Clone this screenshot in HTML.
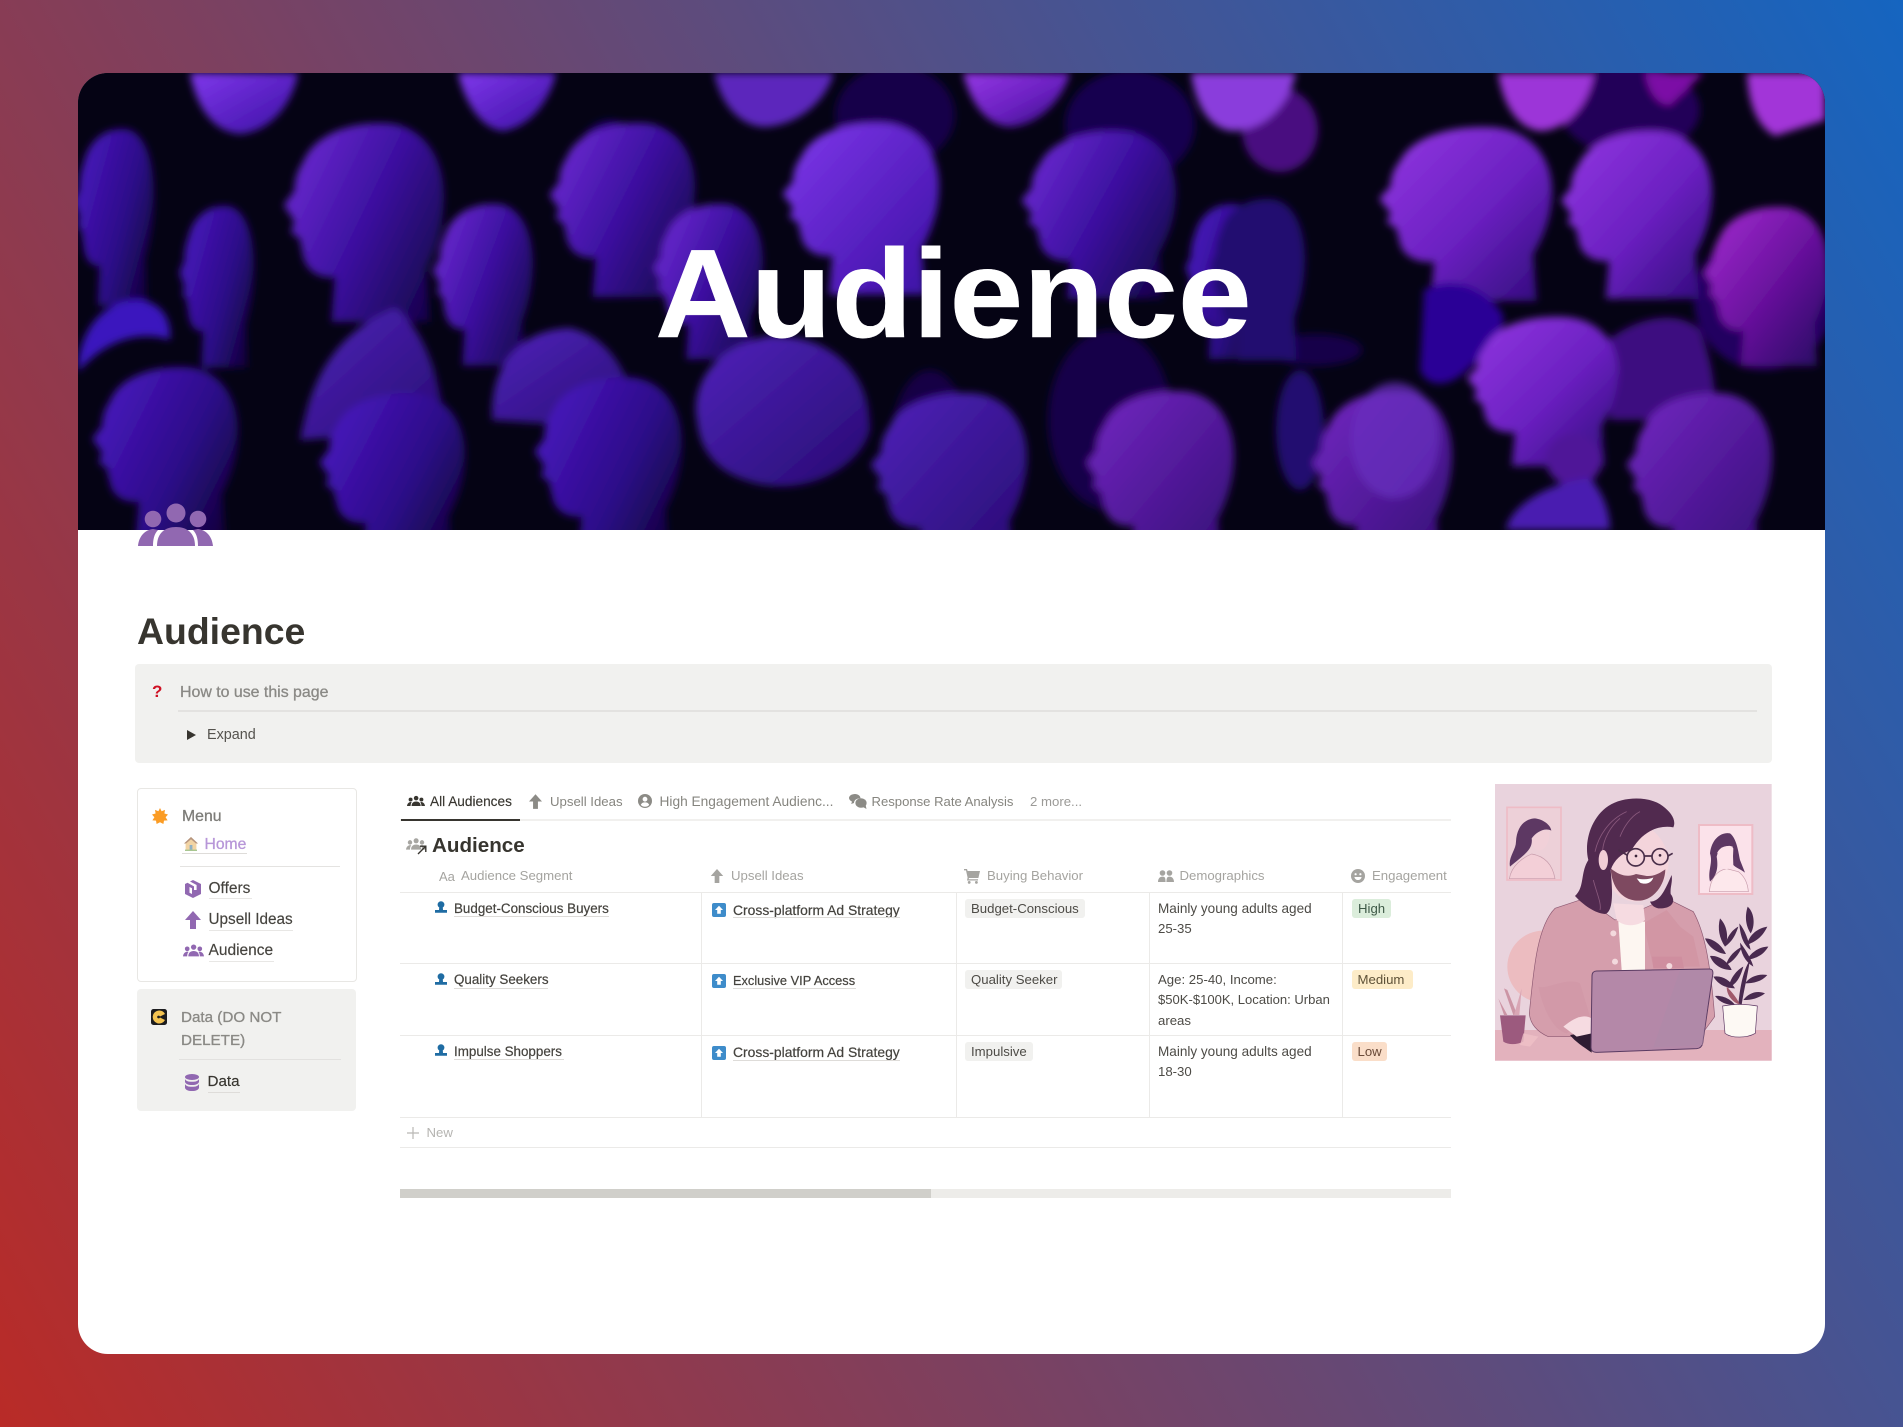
<!DOCTYPE html>
<html lang="en">
<head>
<meta charset="utf-8">
<title>Audience</title>
<style>
html,body{margin:0;padding:0;width:1903px;height:1427px;overflow:hidden}
body{background:linear-gradient(60deg,#b92b27,#1565c0);font-family:"Liberation Sans",sans-serif;color:#37352f;position:relative}
.card{position:absolute;left:78px;top:73px;width:1747px;height:1281px;background:#fff;border-radius:30px;overflow:hidden}
.banner{position:absolute;left:78px;top:73px;width:1747px;height:457px;border-radius:30px 30px 0 0;overflow:hidden;background:#050314}
.banner svg{display:block}
.t{position:absolute;white-space:nowrap;line-height:20px;height:20px}
.sb{-webkit-text-stroke:.3px currentColor}
.u{position:absolute;height:1px;background:#dedcd9}
.ln{position:absolute;background:#ebeaE8}
.i{position:absolute;display:block}
.box{position:absolute}
.tag{position:absolute;height:19px;border-radius:3px}
.hd{font-size:13.2px;color:#a5a4a0}
.tab{font-size:13.3px;color:#86857f}
.cell{font-size:13.2px;color:#4d4b46}
.nm{font-size:13.4px;color:#45433e;-webkit-text-stroke:.2px currentColor}
.side{font-size:15.5px;color:#45433e;-webkit-text-stroke:.15px currentColor}
</style>
</head>
<body>
<svg width="0" height="0" style="position:absolute">
<defs>
<path id="h" d="M20 25C27 6 50-1 70 1C90 4 100 24 100 46C100 64 96 78 90 92L92 125L36 125L38 97C30 98 22 94 20 84L18 73L13 69L15 62L9 52L15 43C15 36 17 30 20 25Z"/>
<linearGradient id="v1" x1="0" y1="0" x2="1" y2="1"><stop offset="0" stop-color="#9438e4"/><stop offset=".55" stop-color="#6a20c0"/><stop offset="1" stop-color="#2e0a78"/></linearGradient>
<linearGradient id="v2" x1="0" y1=".2" x2="1" y2=".8"><stop offset="0" stop-color="#6c2ad2"/><stop offset=".5" stop-color="#3c10a0"/><stop offset="1" stop-color="#16044c"/></linearGradient>
<linearGradient id="v3" x1="0" y1=".2" x2="1" y2=".8"><stop offset="0" stop-color="#4a18c0"/><stop offset=".6" stop-color="#2c0a88"/><stop offset="1" stop-color="#12043c"/></linearGradient>
<linearGradient id="v4" x1="0" y1="0" x2="1" y2="1"><stop offset="0" stop-color="#a62fd4"/><stop offset=".5" stop-color="#6c12a0"/><stop offset="1" stop-color="#240860"/></linearGradient>
<linearGradient id="v5" x1="0" y1="0" x2="1" y2="1"><stop offset="0" stop-color="#8038ec"/><stop offset="1" stop-color="#3a0fa2"/></linearGradient>
<linearGradient id="v6" x1="0" y1="0" x2="1" y2="1"><stop offset="0" stop-color="#5024bc"/><stop offset="1" stop-color="#260a70"/></linearGradient>
<linearGradient id="v7" x1="0" y1="0" x2="1" y2="1"><stop offset="0" stop-color="#7428c4"/><stop offset="1" stop-color="#330c74"/></linearGradient>
<filter id="b" x="-5%" y="-5%" width="110%" height="110%"><feGaussianBlur stdDeviation="4"/></filter>
<filter id="b2"><feGaussianBlur stdDeviation="1"/></filter>
<symbol id="ppl" viewBox="0 0 75 44"><circle cx="38" cy="10" r="9.5"/><circle cx="15" cy="16" r="8.3"/><circle cx="60" cy="16" r="8.3"/><path d="M19 43C19 30 27 24 38 24S57 30 57 43Z"/><path d="M0 43C1 33 7 27 15 26L20 27C16 31 15 37 15 43Z"/><path d="M75 43C74 33 68 27 60 26L55 27C59 31 60 37 60 43Z"/></symbol>
<symbol id="arr" viewBox="0 0 16 18"><path d="M8 0L16 9H11V18H5V9H0Z"/></symbol>
<symbol id="usr" viewBox="0 0 12 12"><circle cx="6" cy="3.6" r="3.4"/><path d="M4.2 6.5H7.8L8 9H12V11.7H0V9H4Z"/></symbol>
<symbol id="ups" viewBox="0 0 14 14"><rect width="14" height="14" rx="2" fill="#3e8cca"/><path d="M7 2.8L11 7H8.8V10.8H5.2V7H3Z" fill="#fff"/></symbol>
</defs>
</svg>

<div class="card"></div>

<div class="banner">
<svg width="1747" height="457" viewBox="78 73 1747 457" role="img">
<rect x="78" y="73" width="1747" height="457" fill="#050314"/>
<g filter="url(#b)">
<!-- dark underlayers -->
<ellipse cx="1130" cy="125" rx="65" ry="55" fill="#180650"/>
<ellipse cx="895" cy="115" rx="60" ry="50" fill="#150548"/>
<ellipse cx="1630" cy="110" rx="70" ry="45" fill="#220658"/>
<ellipse cx="1280" cy="130" rx="38" ry="42" fill="#4a0d80"/>
<ellipse cx="1110" cy="420" rx="62" ry="90" fill="#140548"/>
<ellipse cx="1316" cy="350" rx="46" ry="16" fill="#140548"/>
<ellipse cx="1300" cy="430" rx="24" ry="60" fill="#200870"/>
<ellipse cx="610" cy="170" rx="36" ry="50" fill="#180660"/>
<ellipse cx="1764" cy="300" rx="70" ry="70" fill="#220660"/>
<ellipse cx="930" cy="450" rx="40" ry="80" fill="#120444"/>
<!-- top blobs -->
<path d="M190 73H298C292 105 270 132 240 134C212 132 196 105 190 73Z" fill="url(#v5)"/>
<path d="M458 73H556C550 100 530 128 502 131C480 128 464 100 458 73Z" fill="url(#v5)"/>
<path d="M714 73H834C826 100 800 125 764 127C736 125 720 100 714 73Z" fill="#5b28bc"/>
<path d="M963 73H1070C1062 100 1040 125 1010 127C984 125 970 100 963 73Z" fill="url(#v1)"/>
<path d="M1191 73H1296C1290 100 1270 130 1232 131C1206 128 1195 100 1191 73Z" fill="#8a3cdc"/>
<path d="M1498 73H1594C1590 100 1570 130 1540 131C1515 128 1502 100 1498 73Z" fill="#9c36d8"/>
<path d="M1645 73H1704L1670 105C1656 105 1648 90 1645 73Z" fill="#7c10a6"/>
<path d="M1747 73H1825V120L1775 136C1755 125 1748 100 1747 73Z" fill="#a236d8"/>
<!-- back heads -->
<use href="#h" transform="translate(66,128) scale(.88,1.42)" fill="url(#v3)"/>
<use href="#h" transform="translate(172,205) scale(.82,1.3)" fill="url(#v3)"/>
<use href="#h" transform="translate(268,122) scale(1.76,1.6)" fill="url(#v2)"/>
<use href="#h" transform="translate(423,203) scale(1.1,1.3)" fill="url(#v2)"/>
<use href="#h" transform="translate(535,122) scale(1.6,1.4)" fill="url(#v2)"/>
<use href="#h" transform="translate(643,203) scale(1.2,1.25)" fill="url(#v2)"/>
<use href="#h" transform="translate(767,122) scale(1.72,1.38)" fill="url(#v5)"/>
<use href="#h" transform="translate(1006,130) scale(1.7,1.35)" fill="url(#v2)"/>
<use href="#h" transform="translate(1178,203) scale(.85,1.25)" fill="url(#v3)"/>
<use href="#h" transform="translate(1200,198) scale(1.05,1.3)" fill="#240870"/>
<use href="#h" transform="translate(1362,126) scale(1.9,1.4)" fill="url(#v1)"/>
<use href="#h" transform="translate(1546,130) scale(1.66,1.35)" fill="url(#v1)"/>
<use href="#h" transform="translate(1692,206) scale(1.36,1.28)" fill="url(#v4)"/>
<path d="M1424 290C1445 278 1475 280 1500 310C1512 325 1490 350 1465 372C1445 390 1425 385 1420 370Z" fill="#2a0096"/>
<!-- mid shoulders -->
<path d="M78 362C84 320 112 298 140 300C160 302 172 318 170 340C140 330 105 340 78 372Z" fill="#3a12be"/>
<path d="M300 440C310 385 330 335 395 308C420 325 440 370 445 430Z" fill="url(#v6)"/>
<path d="M492 420C490 370 515 330 570 328C600 335 630 360 640 430Z" fill="url(#v6)"/>
<path d="M1608 340C1640 315 1680 310 1700 330C1712 360 1716 390 1716 420H1610Z" fill="#3c1080"/>
<path d="M697 420C690 385 715 345 770 336C830 335 870 370 870 430C860 470 800 500 745 480C715 470 700 450 697 420Z" fill="url(#v6)"/>
<!-- lower heads -->
<use href="#h" transform="translate(78,366) scale(1.6,1.4)" fill="url(#v3)"/>
<use href="#h" transform="translate(305,392) scale(1.6,1.35)" fill="url(#v3)"/>
<use href="#h" transform="translate(520,376) scale(1.62,1.45)" fill="url(#v3)"/>
<use href="#h" transform="translate(855,392) scale(1.72,1.4)" fill="url(#v6)"/>
<use href="#h" transform="translate(1072,390) scale(1.62,1.4)" fill="url(#v7)"/>
<use href="#h" transform="translate(1298,390) scale(1.54,1.4)" fill="url(#v7)"/>
<ellipse cx="1395" cy="440" rx="44" ry="58" fill="#6a30c0" opacity=".7"/>
<use href="#h" transform="translate(1452,316) scale(1.66,1.2)" fill="url(#v1)"/>
<ellipse cx="1574" cy="460" rx="28" ry="26" fill="#4f1698"/>
<path d="M1506 530C1510 505 1550 482 1590 478C1605 495 1610 515 1610 530Z" fill="#4a1cb0"/>
<use href="#h" transform="translate(1612,392) scale(1.6,1.4)" fill="url(#v7)"/>
</g>
</svg>
<div style="position:absolute;left:577px;top:146px;font-size:126px;line-height:150px;font-weight:700;color:#fff;white-space:nowrap;-webkit-text-stroke:.5px #fff;transform:scaleX(1.052);transform-origin:0 0">Audience</div>
</div>

<!-- page icon -->
<svg class="i" style="left:138px;top:503px;width:75px;height:44px;fill:#9168b1"><use href="#ppl"/></svg>

<div class="t" style="left:137px;top:611px;font-size:37.4px;line-height:40px;height:40px;font-weight:700">Audience</div>

<!-- callout -->
<div class="box" style="left:135px;top:664px;width:1637px;height:99px;background:#f1f1ef;border-radius:4px"></div>
<div class="t" style="left:152px;top:682px;font-size:17px;font-weight:700;color:#cf1124">?</div>
<div class="t sb" style="left:180px;top:683px;font-size:15.9px;color:#8a8985">How to use this page</div>
<div class="ln" style="left:178px;top:710px;width:1579px;height:2px;background:#e3e2e0"></div>
<svg class="i" style="left:187px;top:730px;width:9px;height:10px"><path d="M0 0L9 5L0 10Z" fill="#37352f"/></svg>
<div class="t" style="left:207px;top:725px;font-size:14.4px;color:#55534e">Expand</div>

<!-- menu box -->
<div class="box" style="left:137px;top:788px;width:218px;height:192px;border:1.5px solid #e8e7e4;border-radius:4px;background:#fff"></div>
<svg class="i" style="left:152px;top:808px;width:16px;height:16px" viewBox="0 0 16 16"><path d="M8 0L9.6 3.2L13 1.9L12.4 5.5L16 6.5L13.6 9.2L15.6 12.4L12 12.6L11.4 16L8 14.2L4.6 16L4 12.6L.4 12.4L2.4 9.2L0 6.5L3.6 5.5L3 1.9L6.4 3.2Z" fill="#fb9c24"/></svg>
<div class="t sb" style="left:182px;top:807px;font-size:15.8px;color:#7d7c78">Menu</div>
<svg class="i" style="left:184px;top:837px;width:14px;height:14px" viewBox="0 0 14 14"><path d="M7 0L14 6.5H12.4V13H1.6V6.5H0Z" fill="#f2d4a4"/><path d="M7 0L14 6.5H12L7 2.2L2 6.5H0Z" fill="#b5947e"/><rect x="5.6" y="8" width="2.8" height="5" fill="#8fb0c4"/><rect x="1" y="12.6" width="12" height="1.4" fill="#a8c690"/></svg>
<div class="t sb" style="left:204.5px;top:835px;font-size:15.7px;color:#b796d8">Home</div>
<div class="u" style="left:182px;top:853px;width:65px"></div>
<div class="ln" style="left:180px;top:866px;width:160px;height:1px;background:#e4e3e1"></div>

<svg class="i" style="left:184px;top:880px;width:18px;height:18px" viewBox="0 0 18 18"><path d="M9 0L17 4V14L9 18L1 14V4L3.5 2.8L10 6.4V10H12.6V5L6 1.5Z" fill="#9168b1"/><path d="M5.5 7L8 8.3V14L5.5 12.7Z" fill="#fff"/></svg>
<div class="t side" style="left:208.5px;top:879px">Offers</div>
<div class="u" style="left:209px;top:898px;width:43px;background:#e8e7e5"></div>

<svg class="i" style="left:185px;top:911px;width:16px;height:18px;fill:#9168b1"><use href="#arr"/></svg>
<div class="t side" style="left:208.5px;top:910px;font-size:15.3px">Upsell Ideas</div>
<div class="u" style="left:209px;top:930px;width:84px;background:#e8e7e5"></div>

<svg class="i" style="left:183px;top:944px;width:21px;height:13px;fill:#9168b1"><use href="#ppl"/></svg>
<div class="t side" style="left:208.5px;top:941px">Audience</div>
<div class="u" style="left:209px;top:961px;width:65px;background:#e8e7e5"></div>

<!-- data box -->
<div class="box" style="left:137px;top:989px;width:219px;height:122px;background:#f1f1ef;border-radius:4px"></div>
<svg class="i" style="left:151px;top:1009px;width:16px;height:16px" viewBox="0 0 16 16"><rect width="16" height="16" rx="2.5" fill="#1d1d1f"/><path d="M8 1.5A6.5 6.5 0 1 0 14 11L8 8L14 5A6.5 6.5 0 0 0 8 1.5Z" fill="#f5c451"/><circle cx="7.6" cy="8" r="1.4" fill="#1d1d1f"/></svg>
<div class="t sb" style="left:181px;top:1008px;font-size:15.2px;color:#8a8985">Data (DO NOT</div>
<div class="t sb" style="left:181px;top:1031px;font-size:15.2px;color:#8a8985">DELETE)</div>
<div class="ln" style="left:179px;top:1059px;width:162px;height:1px;background:#e2e1df"></div>
<svg class="i" style="left:185px;top:1074px;width:14px;height:17px" viewBox="0 0 14 17"><ellipse cx="7" cy="3" rx="7" ry="3" fill="#9168b1"/><path d="M0 5C1 7 3 7.8 7 7.8S13 7 14 5V8C13 10 11 11 7 11S1 10 0 8Z" fill="#9168b1"/><path d="M0 10C1 12 3 12.8 7 12.8S13 12 14 10V14C13 16 11 17 7 17S1 16 0 14Z" fill="#9168b1"/></svg>
<div class="t side" style="left:207.5px;top:1072px;font-size:15.2px;color:#37352f">Data</div>
<div class="u" style="left:208px;top:1092px;width:32px"></div>

<!-- tabs -->
<svg class="i" style="left:407px;top:795px;width:18px;height:12px;fill:#37352f"><use href="#ppl"/></svg>
<div class="t tab sb" style="left:430px;top:792px;color:#37352f;font-size:13.65px;-webkit-text-stroke:.15px">All Audiences</div>
<svg class="i" style="left:529px;top:794px;width:13px;height:15px;fill:#8c8b86"><use href="#arr"/></svg>
<div class="t tab" style="left:550px;top:792px;font-size:13.2px">Upsell Ideas</div>
<svg class="i" style="left:638px;top:794px;width:14px;height:14px" viewBox="0 0 14 14"><circle cx="7" cy="7" r="7" fill="#8c8b86"/><circle cx="7" cy="5.2" r="2.4" fill="#fff"/><path d="M2.8 11C3.6 9 5 8.4 7 8.4S10.4 9 11.2 11C10 12.2 8.6 12.8 7 12.8S4 12.2 2.8 11Z" fill="#fff"/></svg>
<div class="t tab" style="left:659.5px;top:792px;font-size:13.72px">High Engagement Audienc...</div>
<svg class="i" style="left:849px;top:794px;width:18px;height:15px" viewBox="0 0 18 15"><path d="M6 0C9 0 11.5 1.8 11.5 4.4C8 4 5 6 5 9L2.2 10L3 7.6C1.2 6.8 0 5.4 0 4C0 1.8 2.8 0 6 0Z" fill="#8c8b86"/><ellipse cx="12" cy="9" rx="5.6" ry="4.8" fill="#8c8b86"/><path d="M14 13L17.5 15L16.6 11Z" fill="#8c8b86"/></svg>
<div class="t tab" style="left:871.5px;top:792px;font-size:13.1px">Response Rate Analysis</div>
<div class="t tab" style="left:1030px;top:792px;color:#9b9a97;font-size:13.2px">2 more...</div>
<div class="ln" style="left:400px;top:819px;width:1051px;height:2px;background:#f1f0ee"></div>
<div class="ln" style="left:401px;top:819px;width:119px;height:2px;background:#37352f"></div>

<!-- db title -->
<svg class="i" style="left:406px;top:838px;width:20px;height:12px;fill:#a7a6a2"><use href="#ppl"/></svg>
<svg class="i" style="left:417px;top:845px;width:10px;height:10px" viewBox="0 0 10 10"><path d="M1 9L8.5 1.5M3 1.2H8.8V7" fill="none" stroke="#37352f" stroke-width="1.4"/></svg>
<div class="t" style="left:432px;top:836px;font-size:20.6px;font-weight:700">Audience</div>

<!-- header -->
<div class="t hd" style="left:439px;top:867px;font-size:13px;color:#a5a4a0">Aa</div>
<div class="t hd" style="left:461px;top:866px">Audience Segment</div>
<svg class="i" style="left:710px;top:869px;width:14px;height:14px;fill:#a5a4a0"><use href="#arr"/></svg>
<div class="t hd" style="left:731px;top:866px">Upsell Ideas</div>
<svg class="i" style="left:964px;top:869px;width:16px;height:15px" viewBox="0 0 16 15"><path d="M0 0H3L3.6 2H16L14.4 9H5L4.6 10.2H14V11.5H3L3.6 8.6L2 1.4H0Z" fill="#a5a4a0"/><circle cx="5.2" cy="13.4" r="1.4" fill="#a5a4a0"/><circle cx="12.4" cy="13.4" r="1.4" fill="#a5a4a0"/></svg>
<div class="t hd" style="left:987px;top:866px">Buying Behavior</div>
<svg class="i" style="left:1158px;top:870px;width:16px;height:12px" viewBox="0 0 16 12"><circle cx="4.5" cy="3" r="2.8" fill="#a5a4a0"/><circle cx="11.5" cy="3" r="2.8" fill="#a5a4a0"/><path d="M0 12C0 8.6 1.8 6.6 4.5 6.6S7.4 8 7.6 12ZM8.4 12C8.6 8 9 6.6 11.5 6.6S16 8.6 16 12Z" fill="#a5a4a0"/></svg>
<div class="t hd" style="left:1179.5px;top:866px">Demographics</div>
<svg class="i" style="left:1351px;top:869px;width:14px;height:14px" viewBox="0 0 14 14"><circle cx="7" cy="7" r="7" fill="#a5a4a0"/><circle cx="4.6" cy="5.2" r="1.1" fill="#fff"/><circle cx="9.4" cy="5.2" r="1.1" fill="#fff"/><path d="M3.4 8H10.6C10.2 10 8.8 11 7 11S3.8 10 3.4 8Z" fill="#fff"/></svg>
<div class="t hd" style="left:1372px;top:866px">Engagement</div>

<!-- grid lines -->
<div class="ln" style="left:400px;top:892px;width:1051px;height:1px"></div>
<div class="ln" style="left:400px;top:963px;width:1051px;height:1px"></div>
<div class="ln" style="left:400px;top:1035px;width:1051px;height:1px"></div>
<div class="ln" style="left:400px;top:1117px;width:1051px;height:1px"></div>
<div class="ln" style="left:400px;top:1147px;width:1051px;height:1px"></div>
<div class="ln" style="left:701px;top:892px;width:1px;height:225px"></div>
<div class="ln" style="left:956px;top:892px;width:1px;height:225px"></div>
<div class="ln" style="left:1149px;top:892px;width:1px;height:225px"></div>
<div class="ln" style="left:1342px;top:892px;width:1px;height:225px"></div>

<!-- row 1 -->
<svg class="i" style="left:434.5px;top:901px;width:12px;height:12px;fill:#1f6ca3"><use href="#usr"/></svg>
<div class="t nm" style="left:454px;top:899px">Budget-Conscious Buyers</div>
<div class="u" style="left:454px;top:916px;width:155px"></div>
<svg class="i" style="left:712px;top:903px;width:14px;height:14px"><use href="#ups"/></svg>
<div class="t nm" style="left:733px;top:899.5px;font-size:13.9px">Cross-platform Ad Strategy</div>
<div class="u" style="left:733px;top:917px;width:167px"></div>
<div class="tag" style="left:965px;top:899px;width:120px;background:#f1f1ef"></div>
<div class="t cell" style="left:971px;top:899px">Budget-Conscious</div>
<div class="t cell" style="left:1158px;top:899px;font-size:13.55px">Mainly young adults aged</div>
<div class="t cell" style="left:1158px;top:919px">25-35</div>
<div class="tag" style="left:1351.5px;top:899px;width:39px;background:#dbeddb"></div>
<div class="t cell" style="left:1358px;top:899px;color:#3f5a48">High</div>

<!-- row 2 -->
<svg class="i" style="left:434.5px;top:973px;width:12px;height:12px;fill:#1f6ca3"><use href="#usr"/></svg>
<div class="t nm" style="left:454px;top:970px">Quality Seekers</div>
<div class="u" style="left:454px;top:988px;width:94px"></div>
<svg class="i" style="left:712px;top:974px;width:14px;height:14px"><use href="#ups"/></svg>
<div class="t nm" style="left:733px;top:971px;font-size:12.8px">Exclusive VIP Access</div>
<div class="u" style="left:733px;top:988px;width:123px"></div>
<div class="tag" style="left:965px;top:970px;width:97px;background:#f1f1ef"></div>
<div class="t cell" style="left:971px;top:970px">Quality Seeker</div>
<div class="t cell" style="left:1158px;top:970px">Age: 25-40, Income:</div>
<div class="t cell" style="left:1158px;top:990px;font-size:13.05px">$50K-$100K, Location: Urban</div>
<div class="t cell" style="left:1158px;top:1011px">areas</div>
<div class="tag" style="left:1351.5px;top:970px;width:61px;background:#fdecc8"></div>
<div class="t cell" style="left:1357.5px;top:970px;color:#5e5238">Medium</div>

<!-- row 3 -->
<svg class="i" style="left:434.5px;top:1044px;width:12px;height:12px;fill:#1f6ca3"><use href="#usr"/></svg>
<div class="t nm" style="left:454px;top:1042px">Impulse Shoppers</div>
<div class="u" style="left:454px;top:1059px;width:110px"></div>
<svg class="i" style="left:712px;top:1046px;width:14px;height:14px"><use href="#ups"/></svg>
<div class="t nm" style="left:733px;top:1042px;font-size:13.9px">Cross-platform Ad Strategy</div>
<div class="u" style="left:733px;top:1060px;width:167px"></div>
<div class="tag" style="left:965px;top:1042px;width:68px;background:#f1f1ef"></div>
<div class="t cell" style="left:971px;top:1041.5px">Impulsive</div>
<div class="t cell" style="left:1158px;top:1042px;font-size:13.55px">Mainly young adults aged</div>
<div class="t cell" style="left:1158px;top:1062px">18-30</div>
<div class="tag" style="left:1351.5px;top:1042px;width:35px;background:#fadec9"></div>
<div class="t cell" style="left:1357.5px;top:1041.5px;color:#6a4a38">Low</div>

<!-- new -->
<svg class="i" style="left:407px;top:1127px;width:12px;height:12px"><path d="M6 0V12M0 6H12" stroke="#b9b8b5" stroke-width="1.2"/></svg>
<div class="t hd" style="left:426.5px;top:1123px;color:#b5b4b1">New</div>

<!-- scrollbar -->
<div class="box" style="left:400px;top:1189px;width:1051px;height:9px;background:#edece9"></div>
<div class="box" style="left:400px;top:1189px;width:531px;height:9px;background:#d0cfca"></div>

<!-- illustration -->
<svg class="i" style="left:1480px;top:770px;width:300px;height:300px" viewBox="0 0 900 900">
<rect x="45" y="42" width="830" height="830" fill="#e9d3dd"/>
<rect x="45" y="780" width="830" height="92" fill="#e3b2bd"/>
<g filter="url(#b2)">
<rect x="81" y="112" width="162" height="218" fill="#edd0d8" stroke="#eebcc6" stroke-width="5"/>
<rect x="657" y="165" width="160" height="207" fill="#fbe2ea" stroke="#eebcc6" stroke-width="6"/>
<path d="M88 326C95 285 130 262 155 252C180 256 215 270 225 326Z" fill="#f3cfd7" stroke="#c79cab" stroke-width="2"/>
<path d="M90 290C84 262 108 240 108 215C110 170 135 146 165 145C190 148 212 165 214 182C195 172 170 185 155 205C160 240 130 255 90 290Z" fill="#5d3763"/>
<path d="M158 205C170 185 195 178 208 185C210 210 200 238 178 242C160 238 152 222 158 205Z" fill="#f1d0d8"/>
<path d="M688 365C692 325 710 302 740 296L775 305C795 320 803 340 805 365Z" fill="#fde8ec" stroke="#c79cab" stroke-width="2"/>
<path d="M690 335C682 300 700 280 690 250C695 205 725 185 750 190C770 205 775 245 780 270L795 308C778 295 770 295 760 285L758 230C740 222 715 235 710 260C715 290 712 315 690 335Z" fill="#5d3763"/>
<path d="M712 248C722 226 750 224 760 235L758 285C745 305 725 298 718 280Z" fill="#fde3ea"/>
<circle cx="190" cy="590" r="108" fill="#ecbcc0"/>
<path d="M148 730C160 610 170 470 225 415L315 385L405 450L480 420L560 385L640 425C670 480 690 560 704 740L660 800H300L205 800C170 785 150 760 148 730Z" fill="#d59eac" stroke="#8e5a73" stroke-width="2"/>
<path d="M175 650C200 660 260 620 300 640L330 740L260 790C220 780 190 720 175 650Z" fill="#cf94a4" opacity=".5"/>
<path d="M490 460L560 420L600 470L640 500L660 590H520Z" fill="#d08f9f" opacity=".55"/>
<path d="M415 455H495V600H425Z" fill="#fdf6f1"/>
<path d="M400 400L490 405L495 450C470 472 430 470 410 450Z" fill="#f6dbe1"/>
<path d="M380 210L500 170C540 190 570 240 565 290C555 350 510 395 470 395C430 395 395 370 380 320Z" fill="#f4d4db"/>
<path d="M392 295C420 318 445 322 468 312L500 318C525 320 545 305 556 298C555 345 520 392 475 392C425 392 395 350 392 295Z" fill="#7e4a60"/>
<path d="M470 325C490 330 510 328 520 322C515 340 495 345 480 338Z" fill="#fff"/>
<path d="M285 378C315 350 300 310 325 270C312 220 330 145 385 108C430 78 510 78 548 108C572 126 590 150 580 172C540 165 490 180 455 240C425 250 402 270 392 300C395 340 405 425 375 432C345 430 310 405 285 378Z" fill="#51294f"/>
<g fill="none" stroke="#8a5a7d" stroke-width="2.5"><path d="M345 245C355 200 385 150 440 125M340 330C350 370 365 400 360 420M420 145C390 170 370 210 368 240M480 125C450 140 430 175 420 200"/></g>
<path d="M510 395C540 395 555 360 575 315C578 340 570 350 572 372C592 398 570 418 535 415C520 412 515 405 510 395Z" fill="#51294f"/>
<ellipse cx="370" cy="270" rx="14" ry="30" fill="#f1cdd6"/>
<g fill="none" stroke="#4a2f4a" stroke-width="5"><circle cx="467" cy="262" r="26"/><circle cx="540" cy="260" r="24"/><path d="M493 258H516M441 255L415 240M564 258L578 250"/></g>
<circle cx="468" cy="258" r="4" fill="#3a2238"/><circle cx="540" cy="256" r="4" fill="#3a2238"/>
<path d="M516 560H605L612 595H520Z" fill="#cf8e9f"/>
<circle cx="400" cy="490" r="9" fill="#f3d9dd"/><circle cx="405" cy="575" r="9" fill="#f3d9dd"/><circle cx="568" cy="588" r="9" fill="#f3d9dd"/>
<path d="M270 795L335 785V848C310 830 285 815 270 795Z" fill="#2d1a33"/>
<path d="M250 770C280 745 310 730 335 745V790L290 800Z" fill="#f6dbe1"/>
<path d="M350 603L688 597C698 597 700 605 698 615L668 820C666 830 660 835 650 836L350 847C340 847 333 842 333 832L336 618C336 608 342 603 350 603Z" fill="#b488a8" stroke="#5a3a62" stroke-width="3"/>
<path d="M600 600L696 600L668 825L520 832Z" fill="#ae8aa8" opacity=".6"/>
<g fill="#49294f"><path d="M803 410C825 430 825 470 812 490C795 465 795 435 803 410Z"/><path d="M720 445C745 470 745 510 735 530C718 505 712 475 720 445Z"/><path d="M862 470C845 505 825 515 800 525C810 490 835 475 862 470Z"/><path d="M778 460C795 480 805 510 812 540C790 525 780 495 778 460Z"/><path d="M675 505C700 505 725 525 738 552C710 550 685 530 675 505Z"/><path d="M775 470C765 500 755 515 735 530C738 505 755 480 775 470Z"/><path d="M865 530C850 555 830 565 800 570C815 545 840 530 865 530Z"/><path d="M780 518C795 535 815 570 820 590C795 575 782 550 780 518Z"/><path d="M690 558C715 555 745 575 755 600C725 600 700 585 690 558Z"/><path d="M787 530C775 555 760 575 738 585C745 560 765 540 787 530Z"/><path d="M862 615C845 635 820 640 795 640C810 620 835 610 862 615Z"/><path d="M700 620C725 615 750 630 765 655C740 655 715 645 700 620Z"/><path d="M790 590C780 625 770 640 745 655C750 625 770 600 790 590Z"/><path d="M855 670C835 685 815 690 790 690C805 670 830 660 855 670Z"/><path d="M705 678C730 675 755 690 765 705C740 705 720 698 705 678Z"/><path d="M810 570C800 630 790 670 785 705H775C780 650 790 600 810 570Z"/></g>
<path d="M740 650C755 665 775 690 780 705C755 695 740 675 740 650Z" fill="#a0586a"/>
<path d="M728 708C760 702 800 702 832 708L826 790C800 805 755 805 735 790Z" fill="#fdf9f4" stroke="#5d3763" stroke-width="2"/>
<path d="M55 685L72 735H82Z M72 655L100 735H112L82 660Z" fill="#cc95a5"/><path d="M125 655L102 735H118Z" fill="#d9a6b5"/>
<path d="M60 736H137L130 815C110 825 85 825 70 815Z" fill="#9c5a7e"/>
<path d="M130 790L175 800L150 830L120 825Z" fill="#efc0c7" opacity=".8"/>
</g>
</svg>
</body>
</html>
